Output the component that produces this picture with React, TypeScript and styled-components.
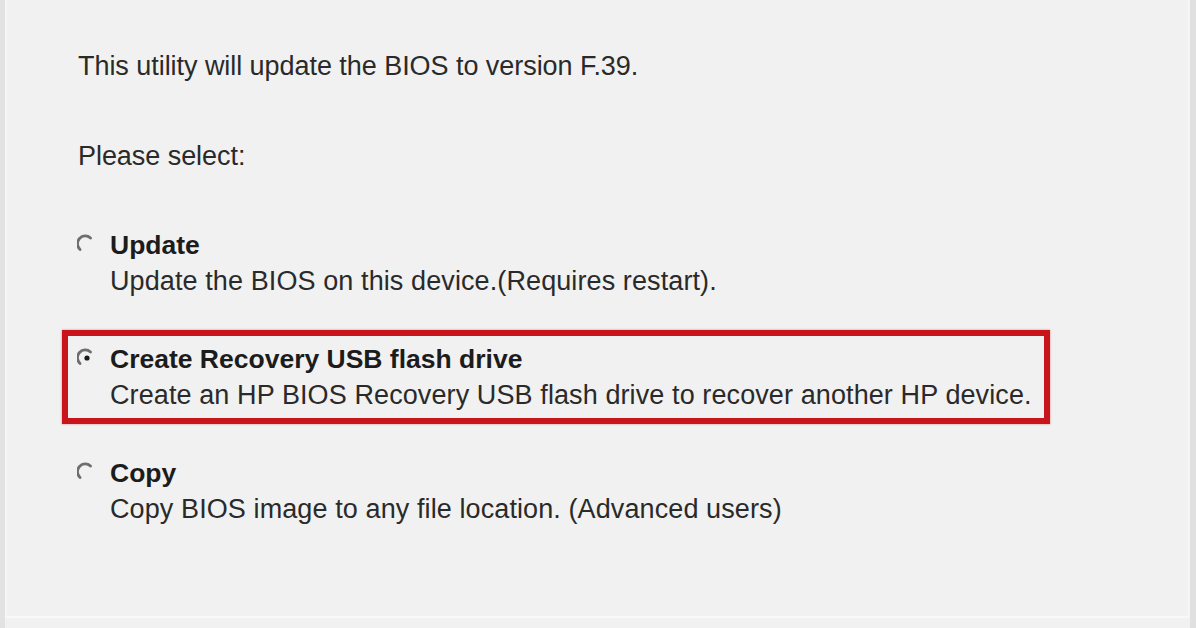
import React from "react";
import styled, { createGlobalStyle } from "styled-components";

const Global = createGlobalStyle`
  html, body { margin: 0; padding: 0; background: #f0f0f0; }
  body { font-family: "Liberation Sans", Arial, sans-serif; }
`;

const Frame = styled.div`
  box-sizing: border-box;
  width: 1196px;
  height: 628px;
  background: #f1f1f1;
  border-left: 5px solid #e2e2e2;
  border-right: 6px solid #e0e0e0;
  overflow: hidden;
`;

const Panel = styled.div`
  box-sizing: border-box;
  height: 618px;
  border-bottom: 2px solid #f8f8f8;
  border-left: 2px solid #f6f6f6;
  border-right: 2px solid #f6f6f6;
  padding: 48px 0 0 55px;
  display: flex;
  flex-direction: column;
`;

const Intro = styled.p<{ $gap: number }>`
  margin: 0 0 ${(p) => p.$gap}px 16px;
  font-size: 27px;
  line-height: 36px;
  letter-spacing: -0.05px;
  color: #2a2a2a;
`;

const Options = styled.div`
  display: flex;
  flex-direction: column;
  gap: 20px;
`;

const Option = styled.div<{ $highlight?: boolean }>`
  box-sizing: border-box;
  width: 988px;
  border: 6px solid ${(p) => (p.$highlight ? "#c8141b" : "transparent")};
  box-shadow: ${(p) => (p.$highlight ? "0 0 2px rgba(200,20,27,0.5)" : "none")};
  padding: 5px 0 5px 9px;
  display: grid;
  grid-template-columns: 16px 1fr;
  column-gap: 17px;
  align-items: center;
`;

const Title = styled.div`
  font-size: 26.5px;
  line-height: 36px;
  font-weight: bold;
  color: #1c1c1c;
`;

const Desc = styled.div`
  grid-column: 2;
  font-size: 27px;
  line-height: 36px;
  letter-spacing: 0.1px;
  color: #2a2a2a;
`;

const RadioIcon = styled.svg`
  display: block;
  margin-top: -4px;
`;

const Radio = ({ checked }: { checked?: boolean }) => (
  <RadioIcon width="16" height="18" viewBox="0 0 16 18" aria-hidden>
    <path
      d="M3 15.5 A7 7 0 0 1 13.5 4"
      fill="none"
      stroke="#6e6e6e"
      strokeWidth="2.8"
      strokeLinecap="round"
    />
    {checked && <circle cx="10" cy="10" r="2.6" fill="#1a1a1a" />}
  </RadioIcon>
);

const data = [
  { title: "Update", desc: "Update the BIOS on this device.(Requires restart)." },
  {
    title: "Create Recovery USB flash drive",
    desc: "Create an HP BIOS Recovery USB flash drive to recover another HP device.",
    selected: true,
  },
  { title: "Copy", desc: "Copy BIOS image to any file location. (Advanced users)" },
];

export default function App() {
  return (
    <>
      <Global />
      <Frame>
        <Panel>
          <Intro $gap={54}>This utility will update the BIOS to version F.39.</Intro>
          <Intro $gap={42}>Please select:</Intro>
          <Options>
            {data.map((o) => (
              <Option key={o.title} $highlight={o.selected}>
                <Radio checked={o.selected} />
                <Title>{o.title}</Title>
                <Desc>{o.desc}</Desc>
              </Option>
            ))}
          </Options>
        </Panel>
      </Frame>
    </>
  );
}
